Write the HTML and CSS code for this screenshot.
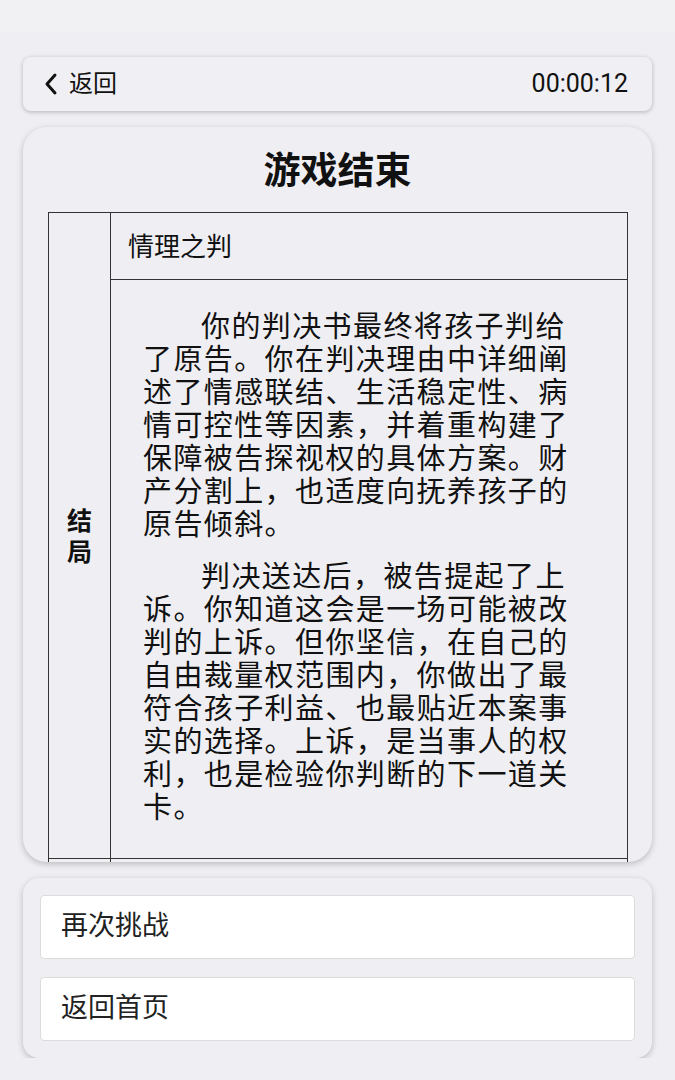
FILE: index.html
```html
<!DOCTYPE html>
<html lang="zh-CN">
<head>
    <meta charset="UTF-8">
    <meta name="viewport" content="width=device-width, initial-scale=1.0">
    <title>游戏结束</title>
    <link rel="stylesheet" href="styles.css">
</head>
<body>

    <div class="status-strip"></div>

    <div class="page">
        <!-- top bar: back link + elapsed time -->
        <div class="top-bar">
            <a class="back-link" href="#">
                <svg class="back-icon" width="16" height="24" viewBox="0 0 16 24">
                    <polyline points="12,3 4,12 12,21" fill="none" stroke="#111" stroke-width="3" stroke-linecap="round" stroke-linejoin="round"/>
                </svg>
                <span>返回</span>
            </a>
            <span class="timer">00:00:12</span>
        </div>

        <!-- result card -->
        <div class="result-card">
            <h1>游戏结束</h1>
            <table class="result-table">
                <tr>
                    <th class="side-label" rowspan="2">结<br>局</th>
                    <td class="ending-name">情理之判</td>
                </tr>
                <tr>
                    <td class="ending-text">
                        <p>你的判决书最终将孩子判给了原告。你在判决理由中详细阐述了情感联结、生活稳定性、病情可控性等因素，并着重构建了保障被告探视权的具体方案。财产分割上，也适度向抚养孩子的原告倾斜。</p>
                        <p>判决送达后，被告提起了上诉。你知道这会是一场可能被改判的上诉。但你坚信，在自己的自由裁量权范围内，你做出了最符合孩子利益、也最贴近本案事实的选择。上诉，是当事人的权利，也是检验你判断的下一道关卡。</p>
                    </td>
                </tr>
                <tr class="next-row">
                    <th class="side-label"></th>
                    <td></td>
                </tr>
            </table>
        </div>

        <!-- actions -->
        <div class="action-panel">
            <button class="action-btn" type="button">再次挑战</button>
            <button class="action-btn" type="button">返回首页</button>
        </div>
    </div>

</body>
</html>
```

FILE: styles.css
```css
/* Base */
body, html {
    margin: 0;
    padding: 0;
    background-color: #efeff3;
    color: #111;
    font-family: "Noto Sans", "Noto Sans CJK SC", sans-serif;
}

.status-strip {
    height: 32px;
    background-color: #f1f1f4;
}

.page {
    padding: 0 23px;
    display: flex;
    flex-direction: column;
}

/* Top bar */
.top-bar {
    margin-top: 25px;
    height: 54px;
    box-sizing: border-box;
    padding: 0 24px 0 20px;
    display: flex;
    align-items: center;
    justify-content: space-between;
    background-color: #f0f0f4;
    border-radius: 8px;
    box-shadow: 0 1px 4px rgba(0, 0, 0, 0.25);
}

.back-link {
    display: flex;
    align-items: center;
    gap: 10px;
    color: #111;
    text-decoration: none;
    font-family: "Noto Sans CJK SC", sans-serif;
    font-size: 24px;
    line-height: 30px;
    padding-bottom: 4px;
}

.back-icon {
    margin-top: 4px;
}

.timer {
    font-family: Roboto, "Noto Sans", sans-serif;
    font-size: 25px;
    color: #111;
    padding-bottom: 2px;
}

/* Result card */
.result-card {
    margin-top: 16px;
    height: 735px;
    overflow: hidden;
    background-color: #efeff3;
    border-radius: 24px;
    box-shadow: 0 2px 6px rgba(0, 0, 0, 0.22);
}

.result-card h1 {
    margin: 20px 0 20px;
    text-align: center;
    font-size: 37px;
    line-height: 45px;
    font-weight: bold;
    color: #111;
}

.result-table {
    margin: 0 24px 0 25px;
    width: 580px;
    border-collapse: collapse;
    border: 1px solid #333;
    table-layout: fixed;
}

.result-table th,
.result-table td {
    border: 1px solid #333;
    padding: 0;
}

.side-label {
    width: 61px;
    font-size: 25px;
    line-height: 31px;
    font-weight: bold;
    text-align: center;
    vertical-align: middle;
    color: #111;
}

.ending-name {
    height: 64px;
    padding: 0 0 2px 17px !important;
    font-size: 26px;
    color: #111;
}

.ending-text {
    padding: 10px 28px 16px 32px !important;
    vertical-align: top;
}

.ending-text p {
    margin: 19px 0;
    width: 434px;
    font-size: 29px;
    line-height: 33px;
    letter-spacing: 1.4px;
    text-indent: 2em;
    color: #111;
}

.next-row td,
.next-row th {
    height: 40px;
}

/* Bottom actions */
.action-panel {
    margin-top: 16px;
    padding: 17px;
    display: flex;
    flex-direction: column;
    gap: 18px;
    background-color: #efeff3;
    border-radius: 16px;
    box-shadow: 0 2px 6px rgba(0, 0, 0, 0.22);
}

.action-btn {
    height: 64px;
    padding: 0 20px 7px;
    text-align: left;
    background-color: #ffffff;
    border: 1px solid #dcdcdc;
    border-radius: 4px;
    font-family: "Noto Sans CJK SC", sans-serif;
    font-size: 27px;
    color: #222;
}
```
